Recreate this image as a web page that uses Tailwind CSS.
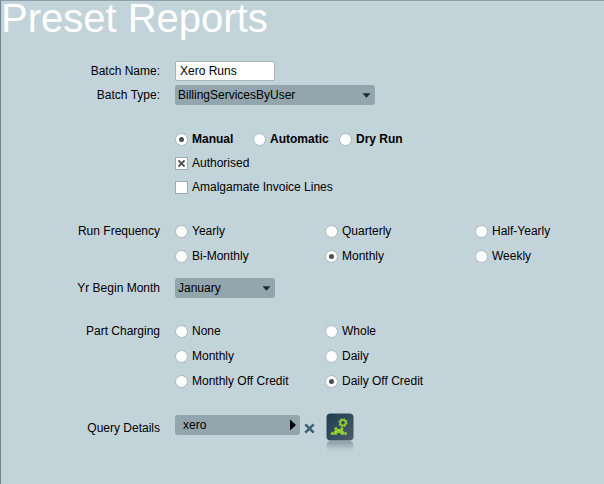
<!DOCTYPE html>
<html lang="en">
<head>
<meta charset="utf-8">
<title>Preset Reports</title>
<script src="https://cdn.jsdelivr.net/npm/@tailwindcss/browser@4"></script>
</head>
<body class="bg-[#c3d3da] font-['Liberation_Sans',Arial,sans-serif] text-xs text-black">
<main class="min-h-screen border-t border-l border-t-[#8fa0a9] border-l-[#72838d]">
  <h1 class="text-[40px] leading-[34px] text-white">Preset Reports</h1>

  <form class="grid grid-cols-[159px_1fr] gap-x-[15px] pt-[26px] pb-6">
    <label for="name" class="text-right leading-5">Batch Name:</label>
    <div><input id="name" type="text" value="Xero Runs" class="block h-5 w-[100px] rounded-xs border border-[#a3b4bc] bg-white px-1 outline-none"></div>

    <label for="type" class="mt-1 text-right leading-5">Batch Type:</label>
    <div class="relative mt-1 w-[200px]">
      <select id="type" class="block h-5 w-full appearance-none rounded-[3px] bg-[#93a5ad] px-[3px] outline-none"><option>BillingServicesByUser</option></select>
      <svg class="pointer-events-none absolute top-2 right-1 h-[5px] w-[9px]" viewBox="0 0 9 5"><path d="M0.5 0.3H8.5L4.5 4.7Z" fill="#132c35"/></svg>
    </div>

    <div class="col-start-2 mt-6 flex flex-col gap-1">
      <div class="flex h-5 items-center font-bold">
        <label class="flex w-[78px] items-center gap-1"><input type="radio" name="mode" checked class="grid size-[13px] appearance-none place-items-center rounded-full border border-[#a9b8c0] bg-white before:size-[5px] before:rounded-full checked:before:bg-[#4c5053]">Manual</label>
        <label class="flex w-[86px] items-center gap-1"><input type="radio" name="mode" class="grid size-[13px] appearance-none place-items-center rounded-full border border-[#a9b8c0] bg-white before:size-[5px] before:rounded-full checked:before:bg-[#4c5053]">Automatic</label>
        <label class="flex items-center gap-1"><input type="radio" name="mode" class="grid size-[13px] appearance-none place-items-center rounded-full border border-[#a9b8c0] bg-white before:size-[5px] before:rounded-full checked:before:bg-[#4c5053]">Dry Run</label>
      </div>
      <label class="relative flex h-5 items-center gap-1"><input type="checkbox" checked class="peer size-[13px] appearance-none border border-[#9aabb3] bg-white">
        <svg class="pointer-events-none absolute left-[3px] hidden size-[7px] peer-checked:block" viewBox="0 0 7 7"><path d="M0.4 0.4L6.6 6.6M6.6 0.4L0.4 6.6" stroke="#45494c" stroke-width="1.8"/></svg>Authorised</label>
      <label class="relative flex h-5 items-center gap-1"><input type="checkbox" class="peer size-[13px] appearance-none border border-[#9aabb3] bg-white">
        <svg class="pointer-events-none absolute left-[3px] hidden size-[7px] peer-checked:block" viewBox="0 0 7 7"><path d="M0.4 0.4L6.6 6.6M6.6 0.4L0.4 6.6" stroke="#45494c" stroke-width="1.8"/></svg>Amalgamate Invoice Lines</label>
    </div>

    <div id="freq" class="mt-6 text-right leading-5">Run Frequency</div>
    <div role="radiogroup" aria-labelledby="freq" class="mt-6 grid grid-cols-[150px_150px_1fr] gap-y-[5px]">
      <label class="flex h-5 items-center gap-1"><input type="radio" name="freq" class="grid size-[13px] appearance-none place-items-center rounded-full border border-[#a9b8c0] bg-white before:size-[5px] before:rounded-full checked:before:bg-[#4c5053]">Yearly</label>
      <label class="flex h-5 items-center gap-1"><input type="radio" name="freq" class="grid size-[13px] appearance-none place-items-center rounded-full border border-[#a9b8c0] bg-white before:size-[5px] before:rounded-full checked:before:bg-[#4c5053]">Quarterly</label>
      <label class="flex h-5 items-center gap-1"><input type="radio" name="freq" class="grid size-[13px] appearance-none place-items-center rounded-full border border-[#a9b8c0] bg-white before:size-[5px] before:rounded-full checked:before:bg-[#4c5053]">Half-Yearly</label>
      <label class="flex h-5 items-center gap-1"><input type="radio" name="freq" class="grid size-[13px] appearance-none place-items-center rounded-full border border-[#a9b8c0] bg-white before:size-[5px] before:rounded-full checked:before:bg-[#4c5053]">Bi-Monthly</label>
      <label class="flex h-5 items-center gap-1"><input type="radio" name="freq" checked class="grid size-[13px] appearance-none place-items-center rounded-full border border-[#a9b8c0] bg-white before:size-[5px] before:rounded-full checked:before:bg-[#4c5053]">Monthly</label>
      <label class="flex h-5 items-center gap-1"><input type="radio" name="freq" class="grid size-[13px] appearance-none place-items-center rounded-full border border-[#a9b8c0] bg-white before:size-[5px] before:rounded-full checked:before:bg-[#4c5053]">Weekly</label>
    </div>

    <label for="month" class="mt-3 text-right leading-5">Yr Begin Month</label>
    <div class="relative mt-3 w-[100px]">
      <select id="month" class="block h-5 w-full appearance-none rounded-[3px] bg-[#93a5ad] px-[3px] outline-none"><option>January</option></select>
      <svg class="pointer-events-none absolute top-2 right-1 h-[5px] w-[9px]" viewBox="0 0 9 5"><path d="M0.5 0.3H8.5L4.5 4.7Z" fill="#132c35"/></svg>
    </div>

    <div id="part" class="mt-[23px] text-right leading-5">Part Charging</div>
    <div role="radiogroup" aria-labelledby="part" class="mt-[23px] grid grid-cols-[150px_1fr] gap-y-[5px]">
      <label class="flex h-5 items-center gap-1"><input type="radio" name="part" class="grid size-[13px] appearance-none place-items-center rounded-full border border-[#a9b8c0] bg-white before:size-[5px] before:rounded-full checked:before:bg-[#4c5053]">None</label>
      <label class="flex h-5 items-center gap-1"><input type="radio" name="part" class="grid size-[13px] appearance-none place-items-center rounded-full border border-[#a9b8c0] bg-white before:size-[5px] before:rounded-full checked:before:bg-[#4c5053]">Whole</label>
      <label class="flex h-5 items-center gap-1"><input type="radio" name="part" class="grid size-[13px] appearance-none place-items-center rounded-full border border-[#a9b8c0] bg-white before:size-[5px] before:rounded-full checked:before:bg-[#4c5053]">Monthly</label>
      <label class="flex h-5 items-center gap-1"><input type="radio" name="part" class="grid size-[13px] appearance-none place-items-center rounded-full border border-[#a9b8c0] bg-white before:size-[5px] before:rounded-full checked:before:bg-[#4c5053]">Daily</label>
      <label class="flex h-5 items-center gap-1"><input type="radio" name="part" class="grid size-[13px] appearance-none place-items-center rounded-full border border-[#a9b8c0] bg-white before:size-[5px] before:rounded-full checked:before:bg-[#4c5053]">Monthly Off Credit</label>
      <label class="flex h-5 items-center gap-1"><input type="radio" name="part" checked class="grid size-[13px] appearance-none place-items-center rounded-full border border-[#a9b8c0] bg-white before:size-[5px] before:rounded-full checked:before:bg-[#4c5053]">Daily Off Credit</label>
    </div>

    <label for="query" class="mt-[22px] text-right leading-[30px]">Query Details</label>
    <div class="mt-[22px] flex items-start">
      <button id="query" type="button" class="mt-[2px] flex h-5 w-[125px] items-center justify-between rounded-[3px] bg-[#93a5ad] pr-1 pl-2">xero
        <svg class="h-3 w-[6px]" viewBox="0 0 6 12"><path d="M0 0.5L6 6L0 11.5Z" fill="#000"/></svg>
      </button>
      <button type="button" aria-label="Clear" class="mt-[10px] ml-1"><svg class="size-[11px]" viewBox="0 0 11 11"><path d="M1.3 1.3L9.7 9.7M9.7 1.3L1.3 9.7" stroke="#406179" stroke-width="2.6"/></svg></button>
      <button type="button" aria-label="Settings" class="ml-[11px]">
        <svg class="h-10 w-7" viewBox="0 0 28 40">
          <defs>
            <linearGradient id="tile" x1="0" y1="0" x2="1" y2="1"><stop offset="0" stop-color="#1d3d50"/><stop offset="1" stop-color="#4c5c6b"/></linearGradient>
            <linearGradient id="fade" x1="0" y1="0" x2="0" y2="1"><stop offset="0" stop-color="#5c6f7b" stop-opacity=".6"/><stop offset="1" stop-color="#8b9ba4" stop-opacity="0"/></linearGradient>
          </defs>
          <rect x="0.5" y="0.5" width="27" height="27" rx="4" fill="url(#tile)"/>
          <path d="M1 31Q1 28.5 4 28.2H24Q27 28.5 27 31V39H1Z" fill="url(#fade)"/>
          <g fill="none" stroke="#8fd02f">
            <circle cx="17" cy="9.7" r="2.8" stroke-width="1.8"/>
            <circle cx="17" cy="9.7" r="4" stroke-width="1.2" stroke-dasharray="1.6 1.54"/>
            <path d="M8.8 21.8A4 4 0 0 1 16.8 21.8" stroke-width="4"/>
            <path d="M5.8 21.8A7 7 0 0 1 19.8 21.8" stroke-width="2.2" stroke-dasharray="2.8 3.6"/>
          </g>
        </svg>
      </button>
    </div>
  </form>
</main>
</body>
</html>
